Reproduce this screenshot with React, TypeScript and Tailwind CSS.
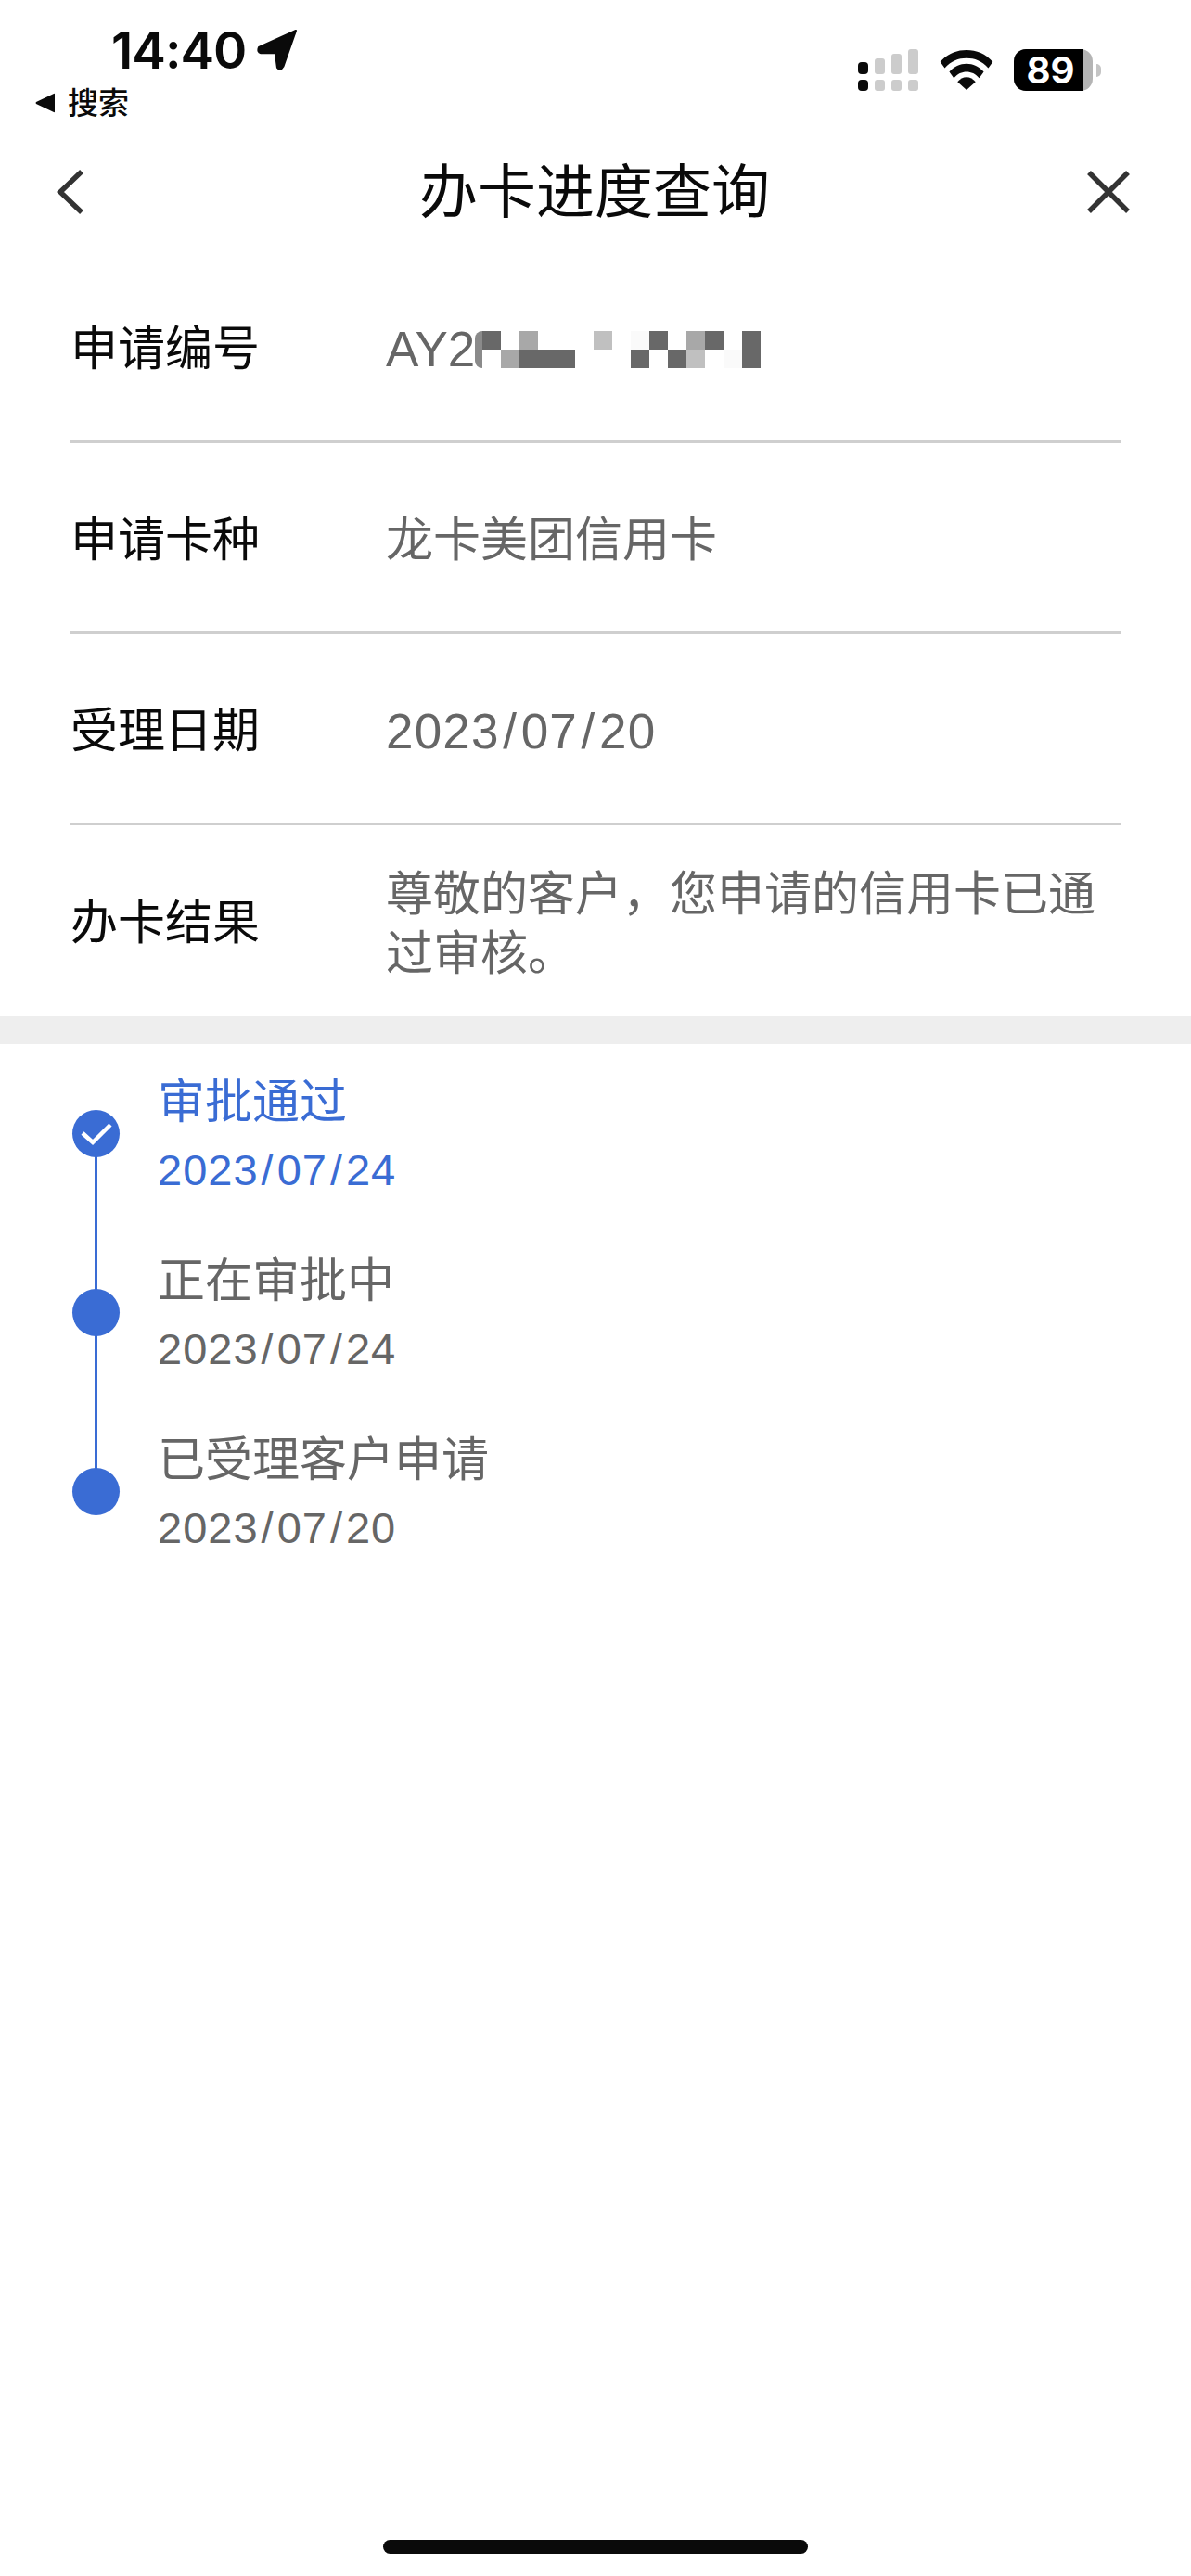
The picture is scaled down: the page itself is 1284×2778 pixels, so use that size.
const CJK = "font-['Liberation_Sans','Noto_Sans_CJK_SC',sans-serif]";

const steps = [
  { title: '审批通过', date: '2023/07/24', active: true },
  { title: '正在审批中', date: '2023/07/24', active: false },
  { title: '已受理客户申请', date: '2023/07/20', active: false },
];

// blurred part of the application number, one string per row of the mosaic
// d = dark, m = mid, l = light, f = almost white, . = white
const mosaic = ['d.m...l.fd.md.d', '.mddd...d.dl.fd'];
const mosaicColor: Record<string, string> = {
  d: 'bg-[#686868]',
  m: 'bg-[#a8a8a8]',
  l: 'bg-[#c0c0c0]',
  f: 'bg-[#fafafa]',
  '.': 'bg-white',
};

// the slashes in the reference's font are wider than Liberation's
function DateText({ value, slashClass }: { value: string; slashClass: string }) {
  const parts = value.split('/');
  return (
    <>
      {parts.map((p, i) => (
        <span key={i}>
          {p}
          {i < parts.length - 1 && <span className={slashClass}>/</span>}
        </span>
      ))}
    </>
  );
}

function StatusBar() {
  return (
    <div className="h-[142px] flex justify-between">
      <div className="pl-[38px] pt-[26px]">
        <div className="flex items-center pl-[82px] h-[56px] gap-[12px]">
          <span className="font-['Inter',sans-serif] text-[55px] leading-none font-semibold tracking-[-1px] text-[#0a0a0a]">14:40</span>
          <svg width="44" height="44" viewBox="0 0 42 42">
            <path d="M40 1 L2 18 Q0 23 4 24 L19 24 L21 39 Q24 43 27 38 Z" fill="#0a0a0a" stroke="#0a0a0a" strokeWidth="2" strokeLinejoin="round" />
          </svg>
        </div>
        <div className="flex items-center gap-[13px] h-[40px] mt-[9px]">
          <svg width="22" height="22" viewBox="0 0 22 22">
            <path d="M21 1.5 L21 20.5 Q21 21.5 20 21 L1 12 Q0 11 1 10 L20 1 Q21 0.5 21 1.5 Z" fill="#0a0a0a" />
          </svg>
          <span className={`${CJK} text-[33px] leading-none font-medium text-[#0a0a0a]`}>搜索</span>
        </div>
      </div>
      <div className="flex items-start pt-[53px] pr-[97px] gap-[22px]">
        <svg width="66" height="45" viewBox="0 0 66 45">
          <rect x="0" y="14" width="11" height="13" rx="4" fill="#0a0a0a" />
          <rect x="0" y="33" width="11" height="12" rx="4" fill="#0a0a0a" />
          <rect x="18" y="10" width="11" height="17" rx="3" fill="#cccccc" />
          <rect x="18" y="33" width="11" height="12" rx="3" fill="#cccccc" />
          <rect x="36" y="5" width="11" height="22" rx="3" fill="#cccccc" />
          <rect x="36" y="33" width="11" height="12" rx="3" fill="#cccccc" />
          <rect x="54" y="0" width="11" height="27" rx="3" fill="#cccccc" />
          <rect x="54" y="33" width="11" height="12" rx="3" fill="#cccccc" />
        </svg>
        <svg width="58" height="43" viewBox="0 0 58 44" className="mt-[1px]">
          <path d="M29 0 C18 0 8 4 0 13 L5 20 C12 12 20 9 29 9 C38 9 46 12 53 20 L58 13 C50 4 40 0 29 0 Z" fill="#0a0a0a" />
          <path d="M29 15 C22 15 15 18 10 24 L15 31 C19 26 24 24 29 24 C34 24 39 26 43 31 L48 24 C43 18 36 15 29 15 Z" fill="#0a0a0a" />
          <path d="M29 30 C25 30 22 32 19 35 L29 44 L39 35 C36 32 33 30 29 30 Z" fill="#0a0a0a" />
        </svg>
        <div className="flex items-center">
          <div className="w-[85px] h-[45px] rounded-[13px] bg-[#b4b4b4]">
            <div className="w-[75px] h-full rounded-l-[13px] bg-black flex items-center justify-center pl-[4px]">
              <span className="font-['Inter',sans-serif] font-bold text-[40px] leading-[45px] text-white">89</span>
            </div>
          </div>
          <div className="w-[5px] h-[14px] ml-[4px] rounded-r-full bg-[#c4c4c4]" />
        </div>
      </div>
    </div>
  );
}

function NavBar() {
  return (
    <div className="h-[130px] flex items-center justify-between pl-[60px] pr-[66px]">
      <svg width="32" height="50" viewBox="0 0 32 50" className="mr-[18px]">
        <path d="M28 3 L5 25 L28 47" fill="none" stroke="#333333" strokeWidth="5.5" />
      </svg>
      <span className={`${CJK} text-[63px] leading-none text-[#0a0a0a]`}>办卡进度查询</span>
      <svg width="46" height="46" viewBox="0 0 46 46">
        <path d="M2 2 L44 44 M44 2 L2 44" fill="none" stroke="#333333" strokeWidth="5.5" />
      </svg>
    </div>
  );
}

function Row({ label, children, last }: { label: string; children: React.ReactNode; last?: boolean }) {
  return (
    <div className={`h-[206px] flex items-center pt-[5px] ${last ? '' : 'border-b-[3px] border-[#cfcfcf]'}`}>
      <div className={`${CJK} w-[340px] text-[51px] leading-none text-[#0a0a0a]`}>{label}</div>
      <div className={`${CJK} flex-1 pt-[2px] text-[51px] leading-[64px] text-[#666666]`}>{children}</div>
    </div>
  );
}

export default function App() {
  return (
    <div className="relative w-[1284px] h-[2778px] bg-white overflow-hidden">
      <StatusBar />
      <NavBar />

      <div className="px-[76px]">
        <Row label="申请编号">
          <div className="flex items-center">
            <span className="w-[96px] text-[53px]">AY2</span>
            <div className="w-[8px] h-[40px] rounded-l-full bg-[#8a8a8a]" />
            <div className="flex flex-col">
              {mosaic.map((line, i) => (
                <div key={i} className="flex">
                  {line.split('').map((c, j) => (
                    <div key={j} className={`w-[20px] h-[20px] ${mosaicColor[c]}`} />
                  ))}
                </div>
              ))}
            </div>
          </div>
        </Row>
        <Row label="申请卡种">龙卡美团信用卡</Row>
        <Row label="受理日期">
          <span className="text-[53px] tracking-[1.2px]">
            <DateText value="2023/07/20" slashClass="mx-[3.5px]" />
          </span>
        </Row>
        <Row label="办卡结果" last>
          尊敬的客户，您申请的信用卡已通过审核。
        </Row>
      </div>

      <div className="h-[30px] bg-[#eeeeee]" />

      <div className="relative pl-[170px] pt-[32px]">
        {/* timeline rail */}
        <div className="absolute left-[102px] top-[90px] w-[3px] h-[400px] bg-[#3a6cd4]" />
        {steps.map((s, i) => (
          <div key={s.title} className="relative h-[193px]">
            <div className="absolute -left-[92px] top-[39px] w-[51px] h-[51px] rounded-full bg-[#3a6cd4] flex items-center justify-center">
              {i === 0 && (
                <svg width="36" height="26" viewBox="0 0 36 26">
                  <path d="M3 12 L14 22 L33 3" fill="none" stroke="white" strokeWidth="4.5" />
                </svg>
              )}
            </div>
            <div className={`${CJK} text-[51px] leading-[62px] ${s.active ? 'text-[#3a6cd4]' : 'text-[#666666]'}`}>{s.title}</div>
            <div className={`font-['Liberation_Sans',sans-serif] text-[47px] leading-[54px] mt-[15px] tracking-[1px] ${s.active ? 'text-[#3a6cd4]' : 'text-[#666666]'}`}>
              <DateText value={s.date} slashClass="mx-[3px]" />
            </div>
          </div>
        ))}
      </div>

      {/* home indicator */}
      <div className="absolute left-[413px] bottom-[24px] w-[458px] h-[15px] rounded-full bg-[#0a0a0a]" />
    </div>
  );
}
